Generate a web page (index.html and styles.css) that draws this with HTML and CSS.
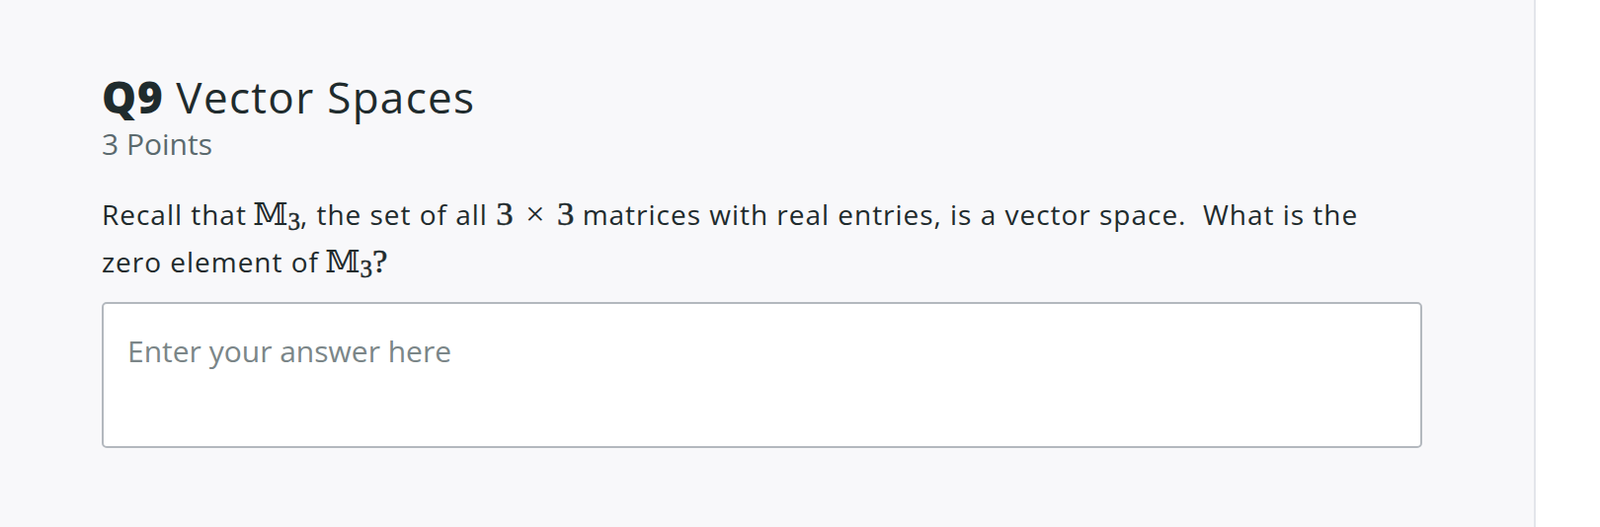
FILE: index.html
```html
<!DOCTYPE html>
<html lang="en">
<head>
<meta charset="utf-8">
<title>Q9 Vector Spaces</title>
<link rel="stylesheet" href="styles.css">
</head>
<body>
<div class="layout">
  <main class="panel">
    <section class="question">
      <header class="q-header">
        <h2 class="q-title"><span class="q-num">Q9</span> Vector Spaces</h2>
        <div class="q-points">3 Points</div>
      </header>
      <p class="q-prompt">Recall that <span class="math"><span class="bb">𝕄</span><span class="sub">3</span></span>, the set of all <span class="math">3<span class="times">×</span>3</span> matrices with real entries, is a vector space.&nbsp; What is the zero element of <span class="math"><span class="bb">𝕄</span><span class="sub">3</span>?</span></p>
      <textarea class="answer" placeholder="Enter your answer here"></textarea>
    </section>
  </main>
  <aside class="side"></aside>
</div>
</body>
</html>
```
FILE: styles.css
```css
html, body {
  margin: 0;
  padding: 0;
  height: 100%;
}
body {
  font-family: "Open Sans", "Liberation Sans", sans-serif;
  color: #1f2b2d;
  background: #ffffff;
}
.layout {
  display: flex;
  height: 534px;
}
.panel {
  width: 1553px;
  flex: none;
  background: #f8f8fa;
  border-right: 2px solid #e3e5ea;
}
.side {
  flex: 1;
  background: #ffffff;
}
.question {
  padding: 74px 0 0 103px;
  width: 1337px;
}
.q-title {
  margin: 0;
  font-size: 44px;
  font-weight: 400;
  line-height: 48px;
  letter-spacing: 0.03em;
  color: #1f2b2d;
}
.q-num {
  font-weight: 800;
  letter-spacing: 0.02em;
}
.q-points {
  font-size: 30px;
  line-height: 34px;
  color: #5b6a6e;
  margin-top: 7px;
}
.q-prompt {
  margin: 30px 0 0;
  max-width: 1320px;
  font-size: 28px;
  letter-spacing: 0.035em;
  line-height: 48px;
}
.math {
  font-family: "Liberation Serif", "DejaVu Serif", serif;
  font-size: 1.24em;
  letter-spacing: 0;
  white-space: nowrap;
  -webkit-text-stroke: 0.5px #1f2b2d;
}
.bb {
  font-family: "DejaVu Serif", "DejaVu Sans", serif;
  font-size: 0.92em;
  -webkit-text-stroke: 0;
  margin-left: -2px;
}
.sub {
  font-size: 0.72em;
  vertical-align: -0.2em;
  line-height: 0;
}
.times {
  padding: 0 0.36em;
  -webkit-text-stroke: 0;
}
.answer {
  display: block;
  box-sizing: border-box;
  margin-top: 17px;
  width: 1337px;
  height: 148px;
  border: 2px solid #b3b8be;
  border-radius: 5px;
  background: #ffffff;
  padding: 30px 24px 26px;
  font-family: "Open Sans", "Liberation Sans", sans-serif;
  font-size: 30px;
  line-height: 36px;
  resize: none;
  outline: none;
}
.answer::placeholder {
  color: #7b8688;
  opacity: 1;
}
```
